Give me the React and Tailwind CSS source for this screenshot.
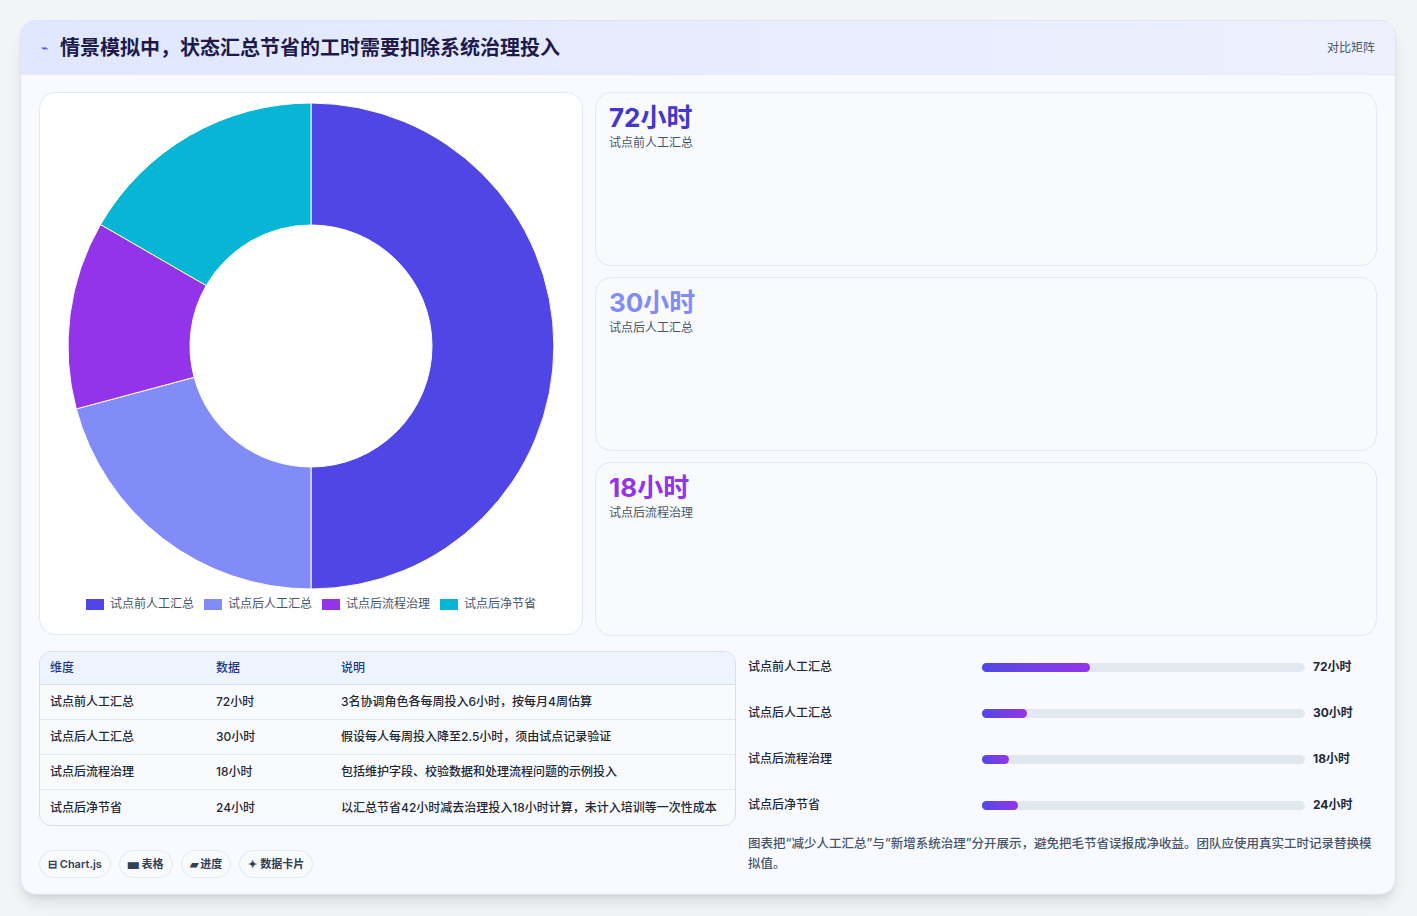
import React from 'react';

const ROWS = [
  { name: '试点前人工汇总', v: 72, note: '3名协调角色各每周投入6小时，按每月4周估算', color: '#4f46e5' },
  { name: '试点后人工汇总', v: 30, note: '假设每人每周投入降至2.5小时，须由试点记录验证', color: '#818cf8' },
  { name: '试点后流程治理', v: 18, note: '包括维护字段、校验数据和处理流程问题的示例投入', color: '#9333ea' },
  { name: '试点后净节省', v: 24, note: '以汇总节省42小时减去治理投入18小时计算，未计入培训等一次性成本', color: '#06b6d4' },
];

function Donut() {
  const total = 144, R = 243, r = 121, cx = 250, cy = 250;
  let a = 0;
  const pt = (ang, rad) => [cx + rad * Math.sin(ang), cy - rad * Math.cos(ang)];
  return (
    <svg width="500" height="500" viewBox="0 0 500 500">
      {ROWS.map((d) => {
        const a0 = a, a1 = a + (d.v / total) * Math.PI * 2;
        a = a1;
        const large = a1 - a0 > Math.PI ? 1 : 0;
        const [x0, y0] = pt(a0, R), [x1, y1] = pt(a1, R), [x2, y2] = pt(a1, r), [x3, y3] = pt(a0, r);
        return <path key={d.name} fill={d.color} stroke="#fff" strokeWidth="1" d={`M${x0} ${y0} A${R} ${R} 0 ${large} 1 ${x1} ${y1} L${x2} ${y2} A${r} ${r} 0 ${large} 0 ${x3} ${y3}Z`} />;
      })}
    </svg>
  );
}

const STATS = [
  { v: '72小时', l: '试点前人工汇总', c: 'text-[#4338ca]' },
  { v: '30小时', l: '试点后人工汇总', c: 'text-[#818cf8]' },
  { v: '18小时', l: '试点后流程治理', c: 'text-[#9333ea]' },
];

export default function App() {
  return (
    <div className="min-h-screen bg-[#f3f4f6] pt-5 px-5 pb-5" style={{ fontFamily: 'Inter, "Noto Sans CJK SC", sans-serif' }}>
      <div className="w-[1376px] bg-[#f8faff] border border-[#dfe3f5] rounded-2xl overflow-hidden shadow-lg">
        <div className="h-[54px] flex items-center justify-between px-5 bg-gradient-to-r from-[#e0e7ff] to-[#eef0fd] border-b border-[#e3e8f6]">
          <div className="flex items-center gap-3">
            <span className="text-[#4f46e5] text-xs">⌁</span>
            <h1 className="text-[20px] font-bold text-[#1e1b4b]">情景模拟中，状态汇总节省的工时需要扣除系统治理投入</h1>
          </div>
          <span className="text-xs text-[#475569]">对比矩阵</span>
        </div>
        <div className="p-[18px] pt-[17px] pb-4">
          <div className="flex gap-3">
            <div className="w-[544px] h-[543px] bg-white border border-[#e3e8f6] rounded-2xl flex flex-col items-center pt-[3px]">
              <Donut />
              <div className="flex gap-2.5 text-xs text-[#475569]">
                {ROWS.map((d) => (
                  <div key={d.name} className="flex items-center gap-1.5">
                    <span className="w-[18px] h-[11px]" style={{ background: d.color }} />{d.name}
                  </div>
                ))}
              </div>
            </div>
            <div className="flex-1 flex flex-col gap-[11px]">
              {STATS.map((s) => (
                <div key={s.v} className="h-[174px] bg-[#f8fafc] border border-[#e3e8f6] rounded-2xl px-[13px] pt-2">
                  <div className={`text-[26px] font-bold leading-[34px] ${s.c}`}>{s.v}</div>
                  <div className="text-xs text-[#475569]">{s.l}</div>
                </div>
              ))}
            </div>
          </div>
          <div className="flex gap-3 mt-[15px]">
            <div className="w-[697px]">
              <div className="border border-[#d6ddee] rounded-xl overflow-hidden text-xs bg-[#f8fafc] font-medium">
                <div className="flex h-[33px] items-center bg-[#eef4ff] border-b border-[#d6ddee] text-[#1e3a8a]">
                  <div className="w-[176px] pl-2.5">维度</div><div className="w-[125px]">数据</div><div>说明</div>
                </div>
                {ROWS.map((d, i) => (
                  <div key={d.name} className={`flex h-[35px] items-center text-[#1f2937] ${i < 3 ? 'border-b border-[#e3e8f0]' : ''}`}>
                    <div className="w-[176px] pl-2.5">{d.name}</div><div className="w-[125px]">{d.v}小时</div><div>{d.note}</div>
                  </div>
                ))}
              </div>
              <div className="flex gap-2 mt-6 text-[11px] text-[#334155]">
                {['⊟ Chart.js', '▅ 表格', '▰ 进度', '✦ 数据卡片'].map((t) => (
                  <span key={t} className="px-2 h-[28px] flex items-center rounded-full border border-[#e3e8f0] bg-[#f8fafc] font-semibold">{t}</span>
                ))}
              </div>
            </div>
            <div className="flex-1">
              <div className="flex flex-col">
                {ROWS.map((d) => (
                  <div key={d.name} className="flex items-center h-[46px] text-xs text-[#1f2937] font-medium first:mt-[-7px]">
                    <div className="w-[234px]">{d.name}</div>
                    <div className="w-[323px] h-[9px] rounded-full bg-[#e2e8f0]">
                      <div className="h-full rounded-full bg-gradient-to-r from-[#4f46e5] to-[#9333ea]" style={{ width: `${(d.v / 216) * 100}%` }} />
                    </div>
                    <div className="ml-2 font-bold">{d.v}小时</div>
                  </div>
                ))}
              </div>
              <p className="mt-1.5 text-[12.5px] leading-5 text-[#475569] font-medium">图表把“减少人工汇总”与“新增系统治理”分开展示，避免把毛节省误报成净收益。团队应使用真实工时记录替换模拟值。</p>
            </div>
          </div>
        </div>
      </div>
    </div>
  );
}
